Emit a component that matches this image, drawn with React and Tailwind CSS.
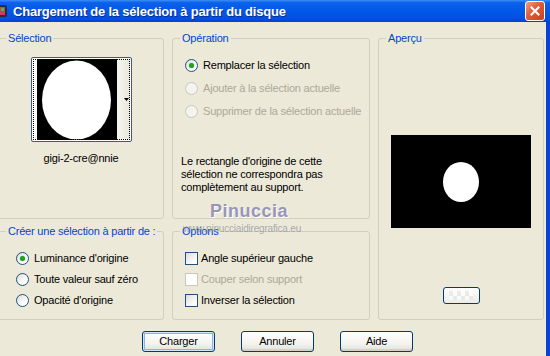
import React from "react";

const FONT = "font-['Tahoma','Liberation_Sans',Arial,sans-serif]";

function Radio({ checked, disabled, label }) {
  return (
    <div className="flex items-center gap-[5px] h-[13px]">
      <span
        className={`w-[13px] h-[13px] shrink-0 rounded-full border flex items-center justify-center ${
          disabled
            ? "border-[#CAC8BB] bg-[#F4F3EE]"
            : "border-[#1C5180] bg-[linear-gradient(135deg,#DCDCD7,#FFFFFF_70%)]"
        }`}
      >
        {checked && <span className="w-[5px] h-[5px] rounded-full bg-[#21A121] shadow-[0_0_1px_#5FCB5F]" />}
      </span>
      <span className={`leading-[13px] whitespace-nowrap ${disabled ? "text-[#ACA899]" : "text-black"}`}>{label}</span>
    </div>
  );
}

function Check({ disabled, label }) {
  return (
    <div className="flex items-center gap-[3px] h-[13px]">
      <span
        className={`w-[13px] h-[13px] shrink-0 border ${
          disabled ? "border-[#CAC8BB] bg-white" : "border-[#1C5180] bg-[linear-gradient(135deg,#DCDCD7,#FFFFFF_80%)]"
        }`}
      />
      <span className={`leading-[13px] whitespace-nowrap ${disabled ? "text-[#ACA899]" : "text-black"}`}>{label}</span>
    </div>
  );
}

function Group({ title, className = "", children }) {
  return (
    <div className={`relative border border-[#D0D0BF] rounded-[3px] ${className}`}>
      <span className="absolute left-[7px] top-[-8px] px-[2px] bg-[#ECE9D8] text-[#0046D5] leading-[14px] whitespace-nowrap">
        {title}
      </span>
      {children}
    </div>
  );
}

function XpButton({ children, def }) {
  return (
    <button
      className={`w-[73px] h-[21px] rounded-[3px] border border-[#003C74] bg-[linear-gradient(to_bottom,#FFFFFF,#F4F3EE_60%,#E3E0D4)] text-black leading-[19px] ${
        def ? "shadow-[inset_0_0_0_1px_#CEE7FF,inset_0_0_0_2px_#97AEE2]" : "shadow-[inset_0_-2px_0_#D6D0C5]"
      }`}
    >
      {children}
    </button>
  );
}

export default function App() {
  return (
    <div className={`w-[550px] h-[356px] overflow-hidden flex flex-col bg-[#ECE9D8] text-[11px] tracking-[-0.2px] ${FONT}`}>
      {/* title bar */}
      <div className="h-[22px] shrink-0 flex items-center justify-between bg-[linear-gradient(to_bottom,#3D8FF5_0%,#0B61EA_12%,#0257E6_55%,#0150DF_85%,#0043CC_100%)] pr-[4px]">
        <div className="flex items-center gap-[5px]">
          <svg width="8" height="12" viewBox="0 0 8 12">
            <rect x="-4" y="0" width="11" height="12" rx="2" fill="#2A2A3A" />
            <rect x="0" y="2" width="5" height="8" fill="#C8405A" />
            <rect x="1" y="3" width="3" height="3" fill="#5AB05A" />
          </svg>
          <span className="text-white font-bold text-[13px] tracking-[-0.2px] leading-none font-['Trebuchet_MS','Liberation_Sans',sans-serif] [text-shadow:1px_1px_0_#0F2A8A]">
            Chargement de la sélection à partir du disque
          </span>
        </div>
        <div className="w-[20px] h-[20px] mr-[1px] rounded-[3px] border border-white bg-[linear-gradient(135deg,#F0A080,#E06040_40%,#C8401C)] flex items-center justify-center">
          <svg width="10" height="10" viewBox="0 0 10 10">
            <path d="M1.5 1.5 L8.5 8.5 M8.5 1.5 L1.5 8.5" stroke="white" strokeWidth="2" strokeLinecap="square" />
          </svg>
        </div>
      </div>

      {/* body */}
      <div className="relative flex-1 border-r-[4px] border-[#0842D8]">
        <div className="ml-[-2px] mt-[16px] grid grid-cols-[166px_198px_166px] grid-rows-[181px_89px] gap-x-[8px] gap-y-[12px]">
          <Group title="Sélection" className="flex flex-col items-center pt-[18px]">
            <div className="relative w-[101px] h-[85px] rounded-[2px] border border-[#3B5A86] bg-white flex items-center pl-[5px]">
              <svg width="80" height="81" viewBox="0 0 80 81" className="block">
                <rect width="80" height="81" fill="black" />
                <ellipse cx="39.5" cy="41" rx="34.5" ry="39.5" fill="white" />
              </svg>
              <div className="w-[13px] h-[81px] bg-[linear-gradient(to_right,#F7F6F1,#E8E6DC)] flex items-center justify-end pr-[1px]">
                <svg width="5" height="3" viewBox="0 0 5 3">
                  <path d="M0 0 H5 L2.5 3 Z" fill="black" />
                </svg>
              </div>
              <div className="absolute inset-[1px] border border-dotted border-black pointer-events-none" />
            </div>
            <div className="mt-[10px] leading-[13px] text-black">gigi-2-cre@nnie</div>
          </Group>

          <Group title="Opération" className="pt-[20px] pl-[12px]">
            <div className="flex flex-col gap-[10px]">
              <Radio checked label="Remplacer la sélection" />
              <Radio disabled label="Ajouter à la sélection actuelle" />
              <Radio disabled label="Supprimer de la sélection actuelle" />
            </div>
            <p className="mt-[37px] ml-[-4px] leading-[13px] text-black">
              Le rectangle d'origine de cette
              <br />
              sélection ne correspondra pas
              <br />
              complètement au support.
            </p>
          </Group>

          <Group title="Aperçu" className="row-span-2 flex flex-col items-center pt-[96px]">
            <svg width="140" height="93" viewBox="0 0 140 93" className="block">
              <rect width="140" height="93" fill="black" />
              <ellipse cx="70" cy="47" rx="18" ry="20" fill="white" />
            </svg>
            <div className="mt-[59px] w-[37px] h-[17px] rounded-[3px] border border-[#003C74] bg-[linear-gradient(to_bottom,#FFFFFF,#EDEBE3)] flex items-center justify-center">
              <div className="w-[24px] h-[9px] grid grid-cols-6 opacity-60">
                {Array.from({ length: 12 }).map((_, i) => (
                  <span
                    key={i}
                    className={(i + Math.floor(i / 6)) % 2 === 0 ? "bg-[#E4E4E4]" : "bg-white"}
                  />
                ))}
              </div>
            </div>
          </Group>

          <Group title="Créer une sélection à partir de :" className="pt-[20px] pl-[17px]">
            <div className="flex flex-col gap-[8px]">
              <Radio checked label="Luminance d'origine" />
              <Radio label="Toute valeur sauf zéro" />
              <Radio label="Opacité d'origine" />
            </div>
          </Group>

          <Group title="Options" className="pt-[20px] pl-[12px]">
            <div className="flex flex-col gap-[8px]">
              <Check label="Angle supérieur gauche" />
              <Check disabled label="Couper selon support" />
              <Check label="Inverser la sélection" />
            </div>
          </Group>
        </div>

        <div className="mt-[11px] pl-[142px] flex gap-[26px]">
          <XpButton def>Charger</XpButton>
          <XpButton>Annuler</XpButton>
          <XpButton>Aide</XpButton>
        </div>

        {/* watermark */}
        <div className="absolute left-[182px] top-[179px] w-[120px] flex flex-col items-center pointer-events-none">
          <span className="ml-[14px] text-[18px] leading-[20px] font-bold tracking-[0.5px] text-[#9796B8] font-['Liberation_Sans',sans-serif] [text-shadow:1px_1px_0_#FFFFFF]">
            Pinuccia
          </span>
          <span className="mt-[2px] text-[10px] leading-[12px] tracking-[-0.2px] text-[#8A8AA0]/70">
            www.pinucciaidiregrafica.eu
          </span>
        </div>
      </div>
    </div>
  );
}
